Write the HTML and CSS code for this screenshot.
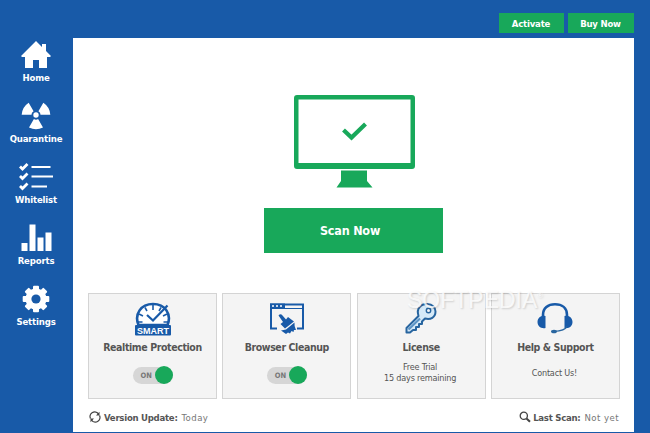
FILE: index.html
```html
<!DOCTYPE html>
<html lang="en">
<head>
<meta charset="utf-8">
<title>Security Scanner</title>
<link rel="stylesheet" href="styles.css">
</head>
<body>
<div class="app">
  <nav class="sidebar">
    <a class="nav-item">
      <svg width="32" height="28" viewBox="0 0 32 28"><path fill="#fff" d="M16 0 22 6V3h4v7l5 5-1 1h-3v11h-8v-8h-6v8H5V16H2l-1-1z"/></svg>
      <span>Home</span>
    </a>
    <a class="nav-item">
      <svg width="32" height="28" viewBox="0 0 32 28"><g fill="#fff"><circle cx="16" cy="13" r="2.7"/><path id="blade" d="M13.9 17 Q16 18.3 18.1 17L23 25.5Q16 29 9 25.5z"/><use href="#blade" transform="rotate(120 16 13)"/><use href="#blade" transform="rotate(240 16 13)"/></g></svg>
      <span>Quarantine</span>
    </a>
    <a class="nav-item">
      <svg width="36" height="28" viewBox="0 0 36 28"><g fill="none" stroke="#fff" stroke-width="2.2"><path d="M13.500 4H32.500M13.500 13.500H35M13.500 23.500H29"/><path stroke-width="2.800" d="M2 3.500 4.500 6 9.500 1M2 13 4.500 15.500 9.500 10.500M2 23 4.500 25.500 9.500 20.500"/></g></svg>
      <span>Whitelist</span>
    </a>
    <a class="nav-item">
      <svg width="32" height="28" viewBox="0 0 32 28"><path fill="#fff" d="M1.500 19h6v8h-6zM9.500 0.500h6V27h-6zM17.500 13.500h6V27h-6zM25.500 8.500h6V27h-6z"/></svg>
      <span>Reports</span>
    </a>
    <a class="nav-item">
      <svg width="28" height="28" viewBox="-14 -14 28 28"><g fill="#fff"><g id="teeth"><rect x="-3" y="-13.300" width="6" height="26.600" rx="1"/><rect x="-13.300" y="-3" width="26.600" height="6" rx="1"/></g><use href="#teeth" transform="rotate(45)"/><circle r="10.500"/></g><circle r="4.600" fill="#185aa8"/></svg>
      <span>Settings</span>
    </a>
  </nav>
  <div class="content">
    <header class="topbar">
      <button class="top-button activate">Activate</button>
      <button class="top-button buy">Buy Now</button>
    </header>
    <main class="panel">
      <section class="hero">
        <svg class="monitor" width="122" height="94" viewBox="0 0 122 94"><path fill="#18a85a" fill-rule="evenodd" d="M3 0H118Q121 0 121 3V71Q121 74 118 74H3Q0 74 0 71V3Q0 0 3 0zM4.500 4.500V68H116.500V4.500z"/><path fill="#18a85a" d="M47 75.500H73V86L78.500 92.500H42.500L47 86z"/><path fill="none" stroke="#18a85a" stroke-width="4.200" d="M49.500 35 57.500 42.500 71.500 29"/></svg>
        <button class="scan-button">Scan Now</button>
      </section>
      <section class="cards">
        <article class="card">
          <svg width="36" height="34" viewBox="0 0 36 34"><path fill="#fff" stroke="#185aa8" stroke-width="2.600" d="M3.500 23C-1 12 6 2 18 2s19 10 14.500 21z"/><path fill="none" stroke="#185aa8" stroke-width="1.600" d="M18 3v5M10 5.500l2 3.500M4 12l4 2M2.500 20h5M28.500 20h5M26 5.500l-2 3.500M32 12l-4 2"/><path fill="none" stroke="#185aa8" stroke-width="2.200" d="M12 13l6 5.500L32.500 3.500"/><rect x="0" y="23" width="36" height="10.500" rx="1" fill="#185aa8"/><text class="smart-label" x="18" y="31.500" text-anchor="middle" textLength="32">SMART</text></svg>
          <h2>Realtime Protection</h2>
          <div class="toggle"><span>ON</span><i></i></div>
        </article>
        <article class="card">
          <svg width="36" height="34" viewBox="0 0 36 34"><path fill="none" stroke="#185aa8" stroke-width="2" d="M8 26.500H2V2.500H34V26.500H28"/><path fill="#185aa8" d="M1 1.500H16V7H1z"/><path stroke="#185aa8" d="M16 6.500H34"/><path stroke="#fff" stroke-width="1.500" stroke-dasharray="2 2" d="M3 4H14"/><path fill="#185aa8" d="M9.500 13.500q2-2.500 4 0l3.500 4 2-2.500 6 4.500-9 7-4.500-4.500 2.500-2zM17 27.500l8.500-7q-.5 4 1.500 7.500l-2 0-.5 2-2-1-1.500 2.500-2-1-2 1.500-5-3.500z"/></svg>
          <h2>Browser Cleanup</h2>
          <div class="toggle"><span>ON</span><i></i></div>
        </article>
        <article class="card">
          <svg width="36" height="34" viewBox="0 0 36 34"><path fill="#d6eaf8" stroke="#28659f" stroke-width="2" stroke-linejoin="round" d="M15.500 14C13 6 18 2 24 2c6 0 8.500 4 8.500 7.500 0 6-5 8.500-10.500 7l-3 3v2.500h-3v3h-3v3h-3L7 30.500H3.500V26z"/><circle cx="25.500" cy="8.500" r="2.200" fill="#f4f4f4" stroke="#28659f" stroke-width="1.400"/><path stroke="#5b93c4" stroke-width="2.200" d="M5.500 27.500 17 16.500"/></svg>
          <h2>License</h2>
          <p>Free Trial<br>15 days remaining</p>
        </article>
        <article class="card">
          <svg width="36" height="34" viewBox="0 0 36 34"><path fill="none" stroke="#185aa8" stroke-width="2.600" d="M6 18V13C6 6 11 2.300 18 2.300S30 6 30 13v5"/><path fill="#185aa8" d="M8.500 14v12C4 27 .5 24 .5 20s3.500-7 8-6zM27.500 14v12c4.500 1 8-2 8-6s-3.500-7-8-6z"/><path fill="none" stroke="#28659f" stroke-width="1.200" d="M30 24q-2 5-13 5.500"/><ellipse cx="17" cy="29.500" rx="3" ry="1.800" fill="#28659f"/></svg>
          <h2>Help &amp; Support</h2>
          <p class="contact">Contact Us!</p>
        </article>
        <div class="watermark">SOFTPEDIA<sup>®</sup></div>
      </section>
      <footer class="status">
        <div class="status-item">
          <svg width="12" height="12" viewBox="0 0 12 12"><g fill="none" stroke="#444" stroke-width="1.300"><path d="M1.500 7.500A4.600 4.600 0 0 1 9.500 3M10.500 4.500A4.600 4.600 0 0 1 2.500 9"/></g><path fill="#444" d="M10.500.8V4.500H7zM1.500 11.200V7.500H5z"/></svg>
          <b>Version Update:</b><span>Today</span>
        </div>
        <div class="status-item last-scan">
          <svg width="12" height="12" viewBox="0 0 12 12"><g fill="none" stroke="#444"><circle cx="4.800" cy="4.800" r="3.600" stroke-width="1.300"/><path stroke-width="2" d="M7.500 7.500 11 10.800"/></g></svg>
          <b>Last Scan:</b><span>Not yet</span>
        </div>
      </footer>
    </main>
  </div>
</div>
</body>
</html>
```

FILE: styles.css
```css
* { box-sizing: border-box; }
body {
  margin: 0;
  font-family: "DejaVu Sans Condensed", "DejaVu Sans", sans-serif;
  font-stretch: condensed;
  font-size: 10px;
  color: #555;
}
svg { display: block; flex: none; }
button { border: 0; padding: 0; font: inherit; font-weight: bold; color: #fff; background: #18a85a; }
.app { display: flex; width: 650px; height: 433px; background: #185aa8; overflow: hidden; }
.sidebar { width: 73px; padding-top: 41px; }
.nav-item {
  display: flex; flex-direction: column; align-items: center;
  height: 61px; padding-right: 1px; color: #fff; font-weight: bold; font-size: 9.5px; line-height: 12px; letter-spacing: -.15px;
}
.nav-item span { margin-top: 3px; }
.content { width: 561px; }
.topbar { display: flex; justify-content: flex-end; gap: 4px; height: 38px; padding-top: 13px; }
.top-button { height: 20px; font-size: 9.5px; letter-spacing: -.2px; }
.activate { width: 65px; padding-right: 1px; }
.buy { width: 66px; padding-right: 1px; }
.panel { height: 394px; background: #fff; }
.hero { display: flex; flex-direction: column; align-items: center; height: 255px; padding-top: 57px; }
.monitor { margin-left: 2px; }
.scan-button { width: 179px; height: 45px; margin-top: 19px; padding-right: 7px; font-size: 12.5px; letter-spacing: -.2px; }
.cards { position: relative; display: grid; grid-template-columns: repeat(4, 129px); gap: 5.3px; padding-left: 15px; }
.card {
  display: flex; flex-direction: column; align-items: center;
  height: 106px; padding-top: 8px; background: #f4f4f4; border: 1px solid #d4d4d4;
}
.card h2 { margin: 4px 0 0; font-size: 10.5px; line-height: 14px; letter-spacing: -.4px; white-space: nowrap; }
.card p { margin: 8px 2px 0 0; font-size: 9px; line-height: 11px; letter-spacing: -.2px; text-align: center; }
.card .contact { margin-top: 14px; }
.smart-label { font: bold 9px "Liberation Sans", sans-serif; fill: #fff; }
.toggle {
  display: flex; align-items: center; justify-content: space-between;
  width: 40px; height: 17px; margin-top: 12.5px; padding-left: 8px;
  border-radius: 9px; background: #d6d6d6; font-size: 7.5px; font-weight: bold; color: #777;
}
.toggle i { width: 18px; height: 18px; border-radius: 50%; background: #18a85a; }
.watermark {
  position: absolute; left: 334px; top: -7px;
  font: 23px/28px "Liberation Sans", sans-serif;
  color: rgba(255, 255, 255, .8); text-shadow: 1px 1px 2px rgba(0, 0, 0, .16);
}
.watermark sup { font-size: 8px; vertical-align: 10px; line-height: 0; }
.status { display: flex; justify-content: space-between; padding: 12px 15px 0 16px; }
.status-item { display: flex; align-items: center; height: 12px; font-size: 9.5px; white-space: nowrap; }
.status-item b { margin: 0 4px 0 3px; letter-spacing: -.25px; }
.status-item span { color: #777; letter-spacing: .45px; }
.last-scan b { margin-left: 2px; }
```
